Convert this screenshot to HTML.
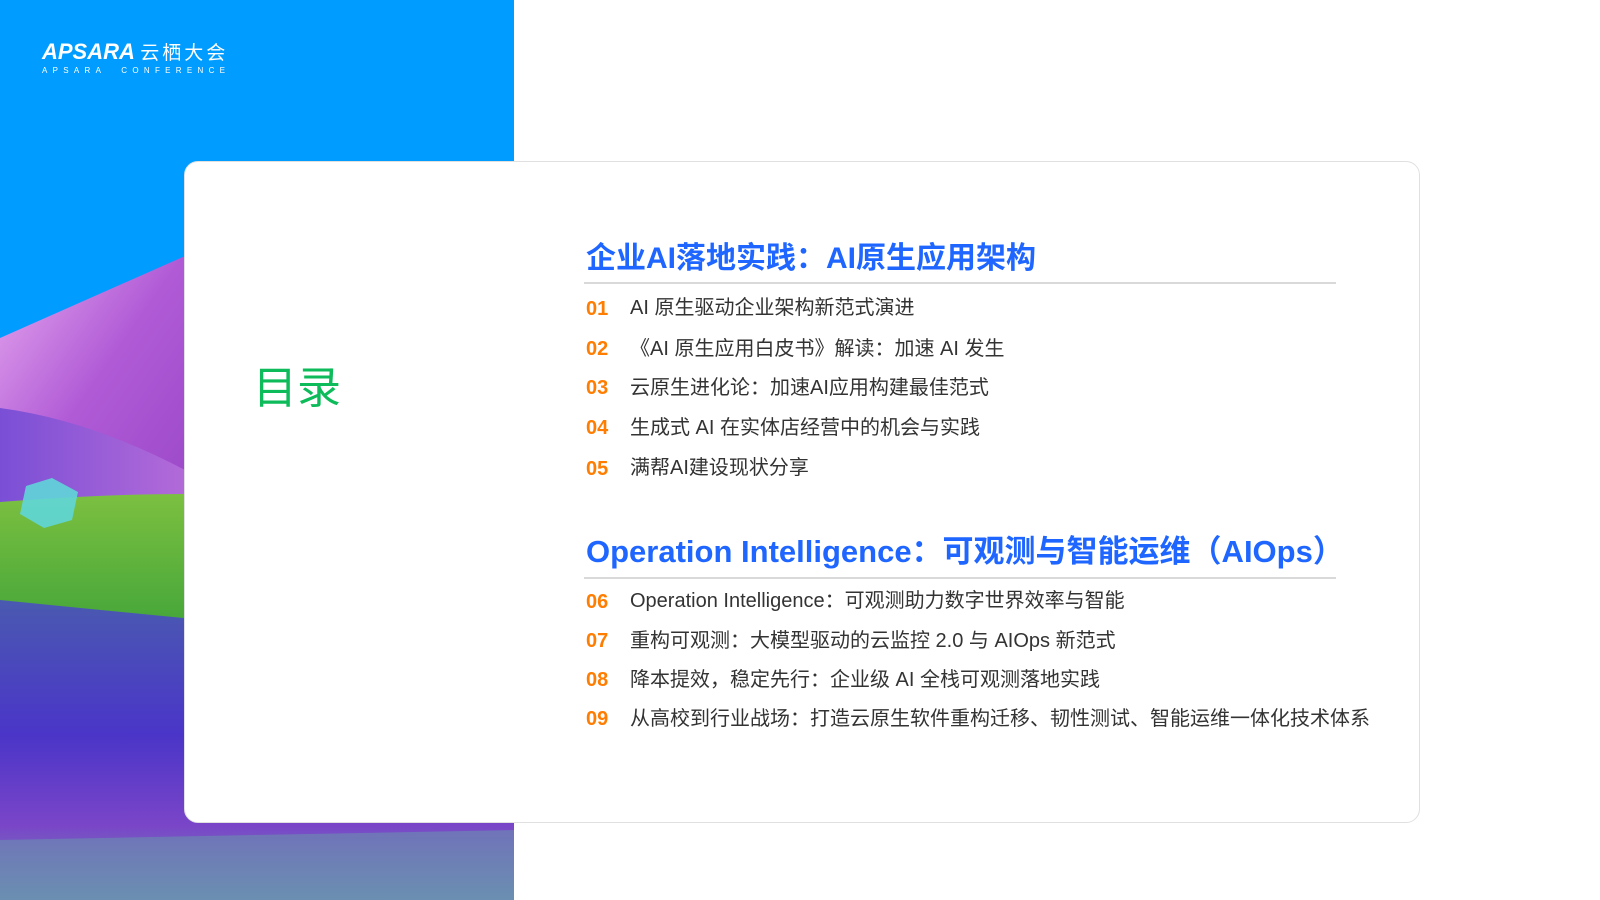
<!DOCTYPE html>
<html><head><meta charset="utf-8"><style>
*{margin:0;padding:0;box-sizing:border-box}
body{width:1600px;height:900px;position:relative;overflow:hidden;background:#fff;font-family:"Liberation Sans","Noto Sans CJK SC",sans-serif}
.left{position:absolute;left:0;top:0;width:514px;height:900px;background:#009cff;overflow:hidden}
.card{position:absolute;left:184px;top:161px;width:1236px;height:662px;background:#fff;border:1.5px solid #e0e0e0;border-radius:14px}
.abs{position:absolute;white-space:nowrap}
.h{color:#1e66ff;font-weight:bold;font-size:30px}
.rule{position:absolute;height:2px;background:#d9d9d9;left:584px;width:752px}
.n{position:absolute;left:586px;color:#ff7d00;font-weight:bold;font-size:20px;line-height:24px;margin-top:-12px}
.t{position:absolute;left:630px;color:#333;font-size:20px;line-height:24px;margin-top:-12px;white-space:nowrap}
</style></head><body>
<div class="left">
<svg width="514" height="900" style="position:absolute;left:0;top:0">
<defs>
<linearGradient id="p1" x1="0" y1="0" x2="1" y2="1"><stop offset="0" stop-color="#e6a8ee"/><stop offset="0.5" stop-color="#b05ad6"/><stop offset="1" stop-color="#9a48c8"/></linearGradient>
<linearGradient id="p2" x1="0" y1="0" x2="1" y2="0"><stop offset="0" stop-color="#7a4fd6"/><stop offset="1" stop-color="#b36ad8"/></linearGradient>
<linearGradient id="g" x1="0" y1="0" x2="0" y2="1"><stop offset="0" stop-color="#7cc040"/><stop offset="0.3" stop-color="#49a83a"/><stop offset="0.6" stop-color="#3d8a50"/><stop offset="1" stop-color="#4a6ab0"/></linearGradient>
<linearGradient id="v" x1="0" y1="0" x2="0" y2="1"><stop offset="0" stop-color="#4a5ab0"/><stop offset="0.45" stop-color="#4a35c8"/><stop offset="0.75" stop-color="#7a45c8"/><stop offset="1" stop-color="#6a8fb0"/></linearGradient>
</defs>
<path d="M0 338 L185 256 L185 520 L0 520Z" fill="url(#p1)"/>
<path d="M0 408 Q90 420 185 470 L185 520 L0 520Z" fill="url(#p2)"/>
<path d="M0 502 Q100 494 185 494 L514 494 L514 900 L0 900Z" fill="url(#g)"/>
<path d="M0 600 Q150 615 514 650 L514 900 L0 900Z" fill="url(#v)"/>
<path d="M0 840 L514 830 L514 900 L0 900Z" fill="#6a90b0" opacity="0.6"/>
<path d="M26 486 L52 478 L78 492 L72 520 L44 528 L20 514Z" fill="#5fd6d8" opacity="0.9"/>
</svg>
<div class="abs" style="left:42px;top:38px;color:#fff;font-weight:bold;font-size:22px;font-style:italic">APSARA <span style="font-style:normal;font-weight:normal;font-size:19px;letter-spacing:3px">云栖大会</span></div>
<div class="abs" style="left:42px;top:66px;color:#fff;font-size:8px;letter-spacing:5.3px">APSARA&nbsp; CONFERENCE</div>
</div>
<div class="card"></div>
<div class="abs" style="left:253px;top:352px;color:#0dbb5a;font-size:44px">目录</div>
<div class="abs h" style="left:586px;top:233px">企业AI落地实践：AI原生应用架构</div>
<div class="rule" style="top:282px"></div>
<div class="n" style="top:309px">01</div><div class="t" style="top:308px">AI 原生驱动企业架构新范式演进</div>
<div class="n" style="top:349px">02</div><div class="t" style="top:349px">《AI 原生应用白皮书》解读：加速 AI 发生</div>
<div class="n" style="top:388px">03</div><div class="t" style="top:388px">云原生进化论：加速AI应用构建最佳范式</div>
<div class="n" style="top:428px">04</div><div class="t" style="top:428px">生成式 AI 在实体店经营中的机会与实践</div>
<div class="n" style="top:469px">05</div><div class="t" style="top:468px">满帮AI建设现状分享</div>
<div class="abs h" style="left:586px;top:526px;font-size:31px">Operation Intelligence：可观测与智能运维（AIOps）</div>
<div class="rule" style="top:577px"></div>
<div class="n" style="top:602px">06</div><div class="t" style="top:601px">Operation Intelligence：可观测助力数字世界效率与智能</div>
<div class="n" style="top:641px">07</div><div class="t" style="top:641px">重构可观测：大模型驱动的云监控 2.0 与 AIOps 新范式</div>
<div class="n" style="top:680px">08</div><div class="t" style="top:680px">降本提效，稳定先行：企业级 AI 全栈可观测落地实践</div>
<div class="n" style="top:719px">09</div><div class="t" style="top:719px">从高校到行业战场：打造云原生软件重构迁移、韧性测试、智能运维一体化技术体系</div>
</body></html>
